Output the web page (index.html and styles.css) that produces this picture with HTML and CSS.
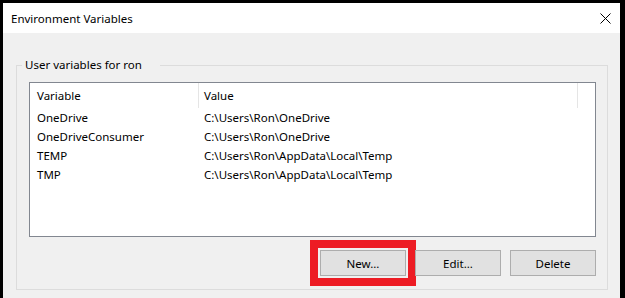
FILE: index.html
```html
<!DOCTYPE html>
<html lang="en">

<head>
  <meta charset="UTF-8">
  <meta name="viewport" content="width=device-width, initial-scale=1.0">
  <title>Environment Variables</title>
  <link rel="stylesheet" href="styles.css">
</head>

<body>
  <div class="window">
    <div class="titlebar">
      <span class="title">Environment Variables</span>
      <svg class="close" width="11" height="11" viewBox="0 0 11 11">
        <path d="M0.5 0.5 L10.5 10.5 M10.5 0.5 L0.5 10.5" stroke="#000" stroke-width="1" fill="none" />
      </svg>
    </div>

    <div class="content">
      <fieldset class="group">
        <legend>User variables for ron</legend>

        <div class="listview">
          <div class="list-header">
            <div class="col col-name">Variable</div>
            <div class="col col-value">Value</div>
            <div class="col col-filler"></div>
          </div>
          <div class="row">
            <div class="cell cell-name">OneDrive</div>
            <div class="cell cell-value">C:\Users\Ron\OneDrive</div>
          </div>
          <div class="row">
            <div class="cell cell-name">OneDriveConsumer</div>
            <div class="cell cell-value">C:\Users\Ron\OneDrive</div>
          </div>
          <div class="row">
            <div class="cell cell-name">TEMP</div>
            <div class="cell cell-value">C:\Users\Ron\AppData\Local\Temp</div>
          </div>
          <div class="row">
            <div class="cell cell-name">TMP</div>
            <div class="cell cell-value">C:\Users\Ron\AppData\Local\Temp</div>
          </div>
        </div>

        <div class="actions">
          <button class="button marked">New...</button>
          <button class="button">Edit...</button>
          <button class="button">Delete</button>
        </div>
      </fieldset>
    </div>
  </div>
</body>

</html>
```

FILE: styles.css
```css
html,
body {
  margin: 0;
}

body {
  height: 298px;
  box-sizing: border-box;
  padding: 3px 5px 0 3px;
  background-color: #000;
  overflow: hidden;
  font-family: 'Noto Sans', 'DejaVu Sans', sans-serif;
  font-size: 11.5px;
  color: #000;
}

.window {
  display: flex;
  flex-direction: column;
  height: 100%;
}

.titlebar {
  display: flex;
  align-items: center;
  justify-content: space-between;
  height: 30px;
  padding: 0 9px 0 8px;
  background-color: #fff;
}

.close {
  display: block;
}

.content {
  flex: 1;
  padding: 24px 12px 0 13px;
  background-color: #f0f0f0;
}

.group {
  margin: 0;
  min-width: 0;
  border: 1px solid #dcdcdc;
  padding: 9px 11px 13px 12px;
}

.group legend {
  margin-left: -7px;
  padding: 0 18px 0 3px;
  line-height: 16px;
}

.listview {
  height: 155px;
  box-sizing: border-box;
  border: 1px solid #828790;
  background-color: #fff;
}

.list-header {
  display: grid;
  grid-template-columns: 169px 379px 1fr;
  height: 25px;
}

.col {
  display: flex;
  align-items: center;
  border-right: 1px solid #e5e5e5;
}

.col-name {
  padding-left: 7px;
}

.col-value {
  padding-left: 5px;
}

.col-filler {
  border-right: 0;
}

.row {
  display: grid;
  grid-template-columns: 169px 1fr;
  height: 19px;
  line-height: 19px;
}

.cell-name {
  padding-left: 7px;
}

.cell-value {
  padding-left: 5px;
}

.actions {
  display: flex;
  justify-content: flex-end;
  gap: 9px;
  margin-top: 13px;
}

.button {
  width: 86px;
  height: 26px;
  padding: 0;
  border: 1px solid #adadad;
  background-color: #e1e1e1;
  font-family: inherit;
  font-size: 11.5px;
  color: #000;
}

/* red annotation box round the New button */
.button.marked {
  outline: 8px solid #ed1c24;
  outline-offset: 2px;
}
```
